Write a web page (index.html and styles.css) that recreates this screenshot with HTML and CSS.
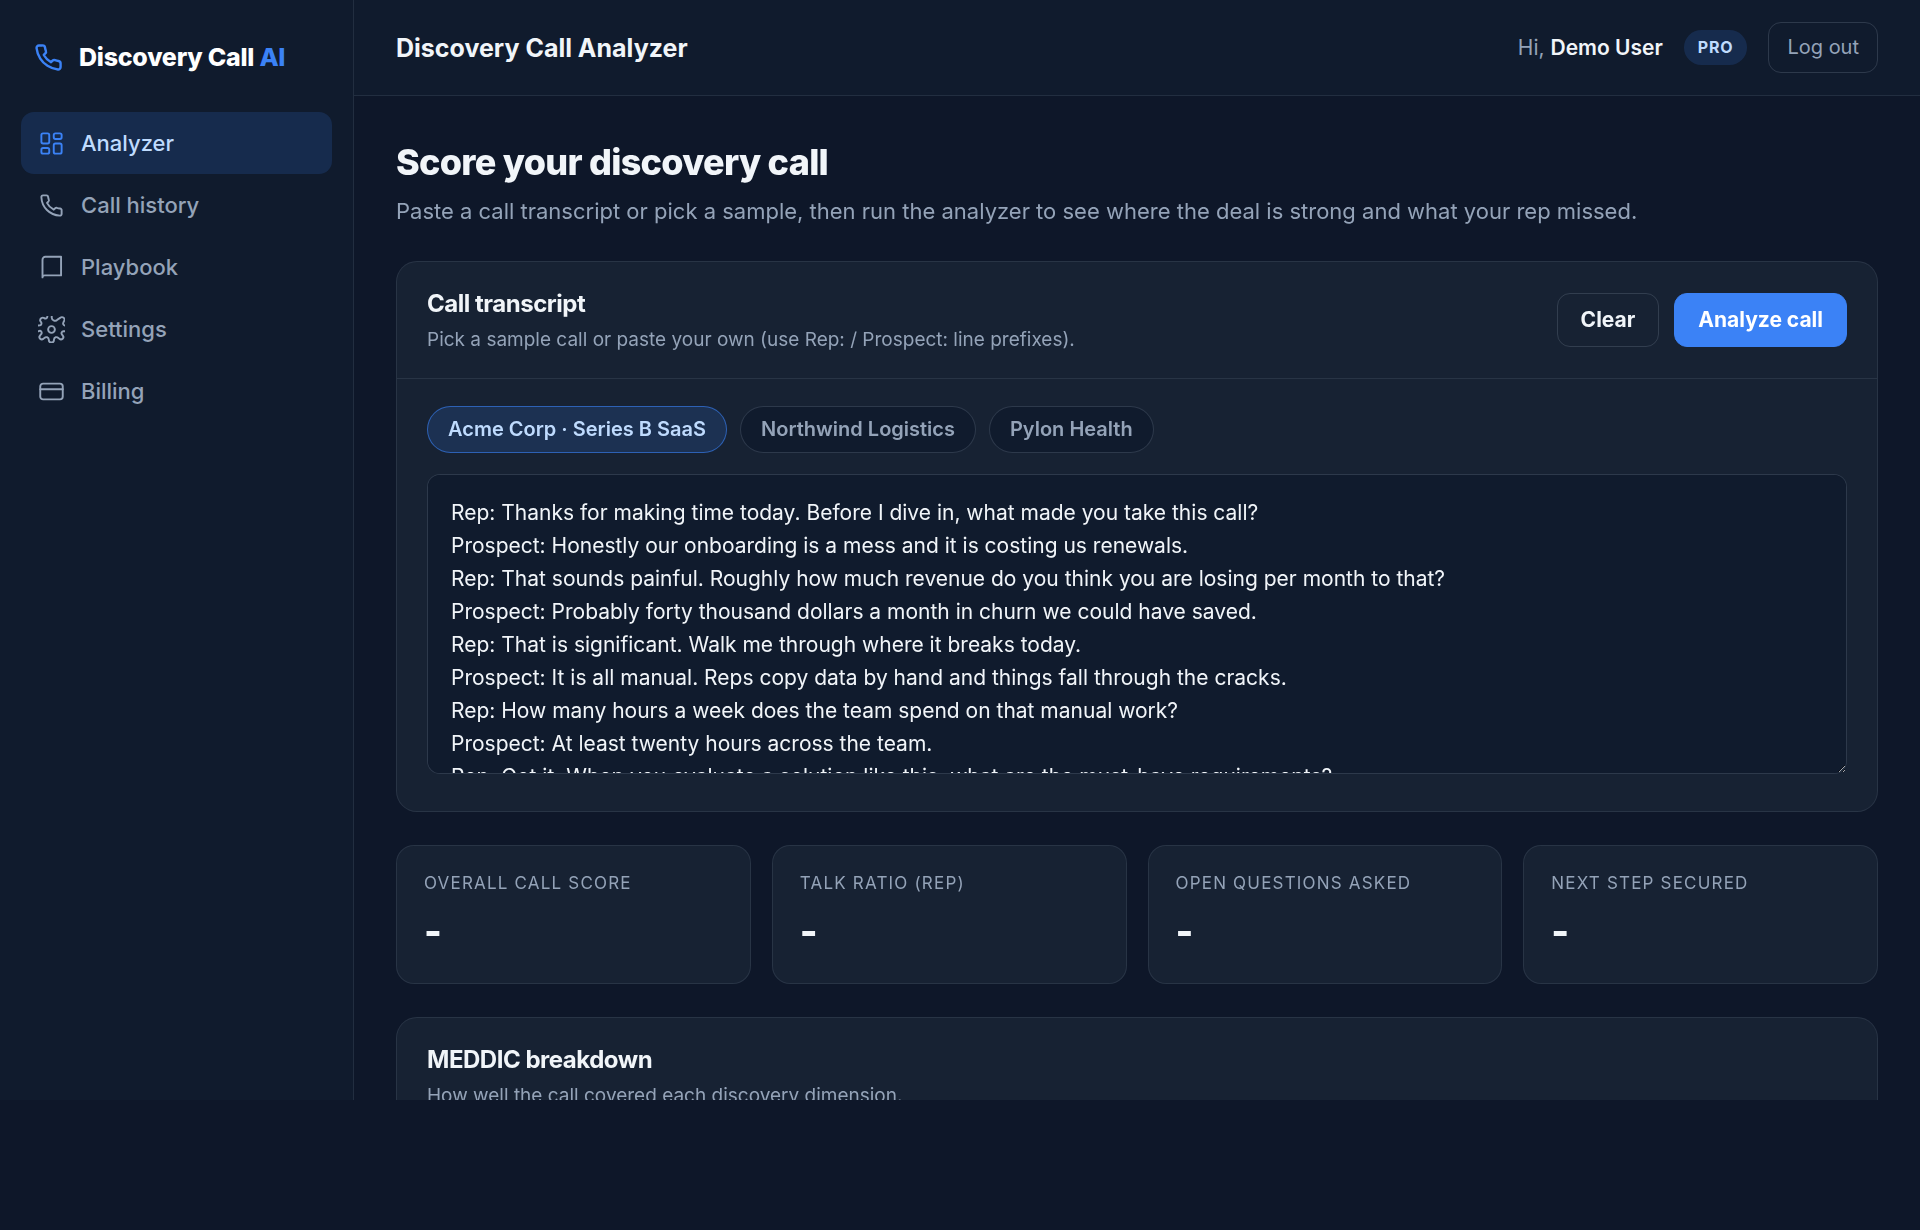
FILE: index.html
```
<!DOCTYPE html>
<html lang="en">
<head>
  <meta charset="UTF-8">
  <meta name="viewport" content="width=device-width, initial-scale=1.0">
  <title>Discovery Call Analyzer</title>
  <link rel="stylesheet" href="styles.css">
</head>
<body>
  <div class="app">
    <!-- Sidebar -->
    <aside class="sidebar">
      <div class="brand">
        <svg class="icon" viewBox="0 0 24 24" xmlns="http://www.w3.org/2000/svg">
          <path d="M22 16.92v3a2 2 0 0 1-2.18 2 19.79 19.79 0 0 1-8.63-3.07 19.5 19.5 0 0 1-6-6 19.79 19.79 0 0 1-3.07-8.67A2 2 0 0 1 4.11 2h3a2 2 0 0 1 2 1.72c.13.96.36 1.9.7 2.81a2 2 0 0 1-.45 2.11L8.09 9.91a16 16 0 0 0 6 6l1.27-1.27a2 2 0 0 1 2.11-.45c.91.34 1.85.57 2.81.7A2 2 0 0 1 22 16.92z"/>
        </svg>
        <span>Discovery Call <span class="accent">AI</span></span>
      </div>
      <nav class="nav">
        <a href="#" class="nav-item active">
          <svg class="icon" viewBox="0 0 24 24" xmlns="http://www.w3.org/2000/svg">
            <rect x="3" y="3" width="7" height="9" rx="1.5"/>
            <rect x="14" y="3" width="7" height="5" rx="1.5"/>
            <rect x="14" y="12" width="7" height="9" rx="1.5"/>
            <rect x="3" y="16" width="7" height="5" rx="1.5"/>
          </svg>
          Analyzer
        </a>
        <a href="#" class="nav-item">
          <svg class="icon" viewBox="0 0 24 24" xmlns="http://www.w3.org/2000/svg">
            <path d="M21 16.5v3a1.5 1.5 0 0 1-1.7 1.5A17 17 0 0 1 3 4.7 1.5 1.5 0 0 1 4.5 3h3a1.5 1.5 0 0 1 1.5 1.3c.1.9.3 1.7.6 2.5a1.5 1.5 0 0 1-.3 1.6L8 9.7a13 13 0 0 0 6 6l1.3-1.3a1.5 1.5 0 0 1 1.6-.3c.8.3 1.6.5 2.5.6a1.5 1.5 0 0 1 1.6 1.8z"/>
          </svg>
          Call history
        </a>
        <a href="#" class="nav-item">
          <svg class="icon" viewBox="0 0 24 24" xmlns="http://www.w3.org/2000/svg">
            <path d="M4 20.8V5a2.5 2.5 0 0 1 2.5-2.5h14V19H6a2 2 0 0 0-2 1.8z"/>
          </svg>
          Playbook
        </a>
        <a href="#" class="nav-item">
          <svg class="icon" viewBox="0 0 24 24" xmlns="http://www.w3.org/2000/svg">
            <circle cx="12" cy="12" r="3"/>
            <path d="M8.3-1V.6a1.7 1.7 0 0 1-2.7 1.3A2.4 2.4 0 0 0 1.9 4.2L2.8 5.6A1.7 1.7 0 0 1 1.8 8.2L-1 8.5"/>
            <path d="M-1 13.5H.6a1.7 1.7 0 0 1 1.9 2.9l-.6.9a2 2 0 0 0 2.9 2.9l.9-.6a2.2 2.2 0 0 1 3.9 1.3v.4a2.3 2.3 0 0 0 4.6 0v-.4a2.2 2.2 0 0 1 3.9-1.3l.9.6a2 2 0 0 0 2.9-2.9l-.6-.9a1.7 1.7 0 0 1 1.3-2.8H25"/>
            <path d="M25 8.4h-1.2a1.7 1.7 0 0 1-1.2-2.6l.3-.9a2.2 2.2 0 0 0-3.2-3.2l-2.4 1.5A2.9 2.9 0 0 1 12.2 1.5V-1"/>
          </svg>
          Settings
        </a>
        <a href="#" class="nav-item">
          <svg class="icon" viewBox="0 0 24 24" xmlns="http://www.w3.org/2000/svg">
            <rect x="2" y="5" width="20" height="14" rx="2.5"/>
            <path d="M2 10h20"/>
          </svg>
          Billing
        </a>
      </nav>
    </aside>

    <div class="main">
      <!-- Top bar -->
      <header class="topbar">
        <div class="topbar-title">Discovery Call Analyzer</div>
        <div class="user">
          <span class="greeting">Hi, <strong>Demo User</strong></span>
          <span class="plan">PRO</span>
          <button type="button" class="logout">Log out</button>
        </div>
      </header>

      <main class="content">
        <div class="page-head">
          <h1>Score your discovery call</h1>
          <p>Paste a call transcript or pick a sample, then run the analyzer to see where the deal is strong and what your rep missed.</p>
        </div>

        <!-- Transcript input -->
        <section class="card">
          <div class="card-head">
            <div>
              <h2>Call transcript</h2>
              <p>Pick a sample call or paste your own (use Rep: / Prospect: line prefixes).</p>
            </div>
            <div class="actions">
              <button type="button" class="btn">Clear</button>
              <button type="button" class="btn btn-primary">Analyze call</button>
            </div>
          </div>
          <div class="card-body">
            <div class="samples">
              <button type="button" class="chip active">Acme Corp · Series B SaaS</button>
              <button type="button" class="chip">Northwind Logistics</button>
              <button type="button" class="chip">Pylon Health</button>
            </div>
            <textarea class="transcript" aria-label="Call transcript" spellcheck="false">Rep: Thanks for making time today. Before I dive in, what made you take this call?
Prospect: Honestly our onboarding is a mess and it is costing us renewals.
Rep: That sounds painful. Roughly how much revenue do you think you are losing per month to that?
Prospect: Probably forty thousand dollars a month in churn we could have saved.
Rep: That is significant. Walk me through where it breaks today.
Prospect: It is all manual. Reps copy data by hand and things fall through the cracks.
Rep: How many hours a week does the team spend on that manual work?
Prospect: At least twenty hours across the team.
Rep: Got it. When you evaluate a solution like this, what are the must-have requirements?</textarea>
          </div>
        </section>

        <!-- Summary numbers -->
        <section class="stats">
          <div class="stat">
            <div class="stat-label">Overall call score</div>
            <div class="stat-value">-</div>
          </div>
          <div class="stat">
            <div class="stat-label">Talk ratio (rep)</div>
            <div class="stat-value">-</div>
          </div>
          <div class="stat">
            <div class="stat-label">Open questions asked</div>
            <div class="stat-value">-</div>
          </div>
          <div class="stat">
            <div class="stat-label">Next step secured</div>
            <div class="stat-value">-</div>
          </div>
        </section>

        <section class="card">
          <div class="card-head">
            <div>
              <h2>MEDDIC breakdown</h2>
              <p>How well the call covered each discovery dimension.</p>
            </div>
          </div>
        </section>
      </main>
    </div>
  </div>
</body>
</html>
```

FILE: styles.css
```
/* Colors */
:root {
  --background: #0e1729;
  --panel: #101b2d;
  --card: #172233;
  --border: rgba(148, 163, 184, 0.14);
  --border-strong: rgba(148, 163, 184, 0.22);
  --text: #f1f5f9;
  --muted: #94a3b8;
  --primary: #3b82f6;
  --primary-soft: rgba(59, 130, 246, 0.16);
  --primary-text: #bfdbfe;
}
* {
  margin: 0;
  padding: 0;
  box-sizing: border-box;
}
body {
  height: 100vh;
  padding-bottom: 130px;
  font-family: Inter, "Liberation Sans", sans-serif;
  font-size: 21px;
  line-height: 32px;
  background: var(--background);
  color: var(--text);
  overflow: hidden;
}
button,
textarea {
  font-family: inherit;
  color: inherit;
}
button {
  cursor: pointer;
}
.app {
  display: flex;
  height: 100%;
  overflow: hidden;
}
.icon {
  flex: none;
  width: 27px;
  height: 27px;
  fill: none;
  stroke: currentColor;
  stroke-width: 1.7;
  stroke-linecap: round;
  stroke-linejoin: round;
}

/* Sidebar */
.sidebar {
  flex: none;
  width: 354px;
  padding: 36px 21px;
  background: var(--panel);
  border-right: 1px solid var(--border);
}
.brand {
  display: flex;
  align-items: center;
  gap: 16px;
  padding: 5px 13px;
  margin-bottom: 34px;
  font-size: 25px;
  font-weight: 800;
  letter-spacing: -0.01em;
  color: #ffffff;
}
.brand .icon {
  width: 29px;
  height: 29px;
  stroke-width: 2;
  color: var(--primary);
}
.accent {
  color: var(--primary);
}
.nav {
  display: flex;
  flex-direction: column;
}
.nav-item {
  display: flex;
  align-items: center;
  gap: 16px;
  padding: 15px 17px;
  border-radius: 13px;
  color: var(--muted);
  font-size: 22px;
  font-weight: 500;
  text-decoration: none;
}
.nav-item.active {
  background: var(--primary-soft);
  color: var(--primary-text);
}
.nav-item.active .icon {
  color: var(--primary);
}

/* Top bar */
.main {
  flex: 1;
  min-width: 0;
  display: flex;
  flex-direction: column;
}
.topbar {
  flex: none;
  display: flex;
  align-items: center;
  justify-content: space-between;
  padding: 22px 42px;
  background: var(--panel);
  border-bottom: 1px solid var(--border);
}
.topbar-title {
  font-size: 25px;
  font-weight: 700;
}
.user {
  display: flex;
  align-items: center;
  gap: 21px;
}
.greeting {
  color: var(--muted);
}
.greeting strong {
  color: var(--text);
  font-weight: 600;
}
.plan {
  padding: 4px 14px;
  border-radius: 18px;
  background: var(--primary-soft);
  color: var(--primary-text);
  font-size: 16px;
  line-height: 27px;
  font-weight: 700;
  letter-spacing: 0.05em;
}
.logout {
  padding: 9px 18px;
  border: 1px solid var(--border-strong);
  border-radius: 13px;
  background: none;
  color: var(--muted);
  font-size: 20px;
  line-height: 31px;
}

/* Page content */
.content {
  flex: 1;
  min-height: 0;
  padding: 42px;
  overflow: hidden;
}
.page-head {
  margin-bottom: 33px;
}
.page-head h1 {
  margin-bottom: 8px;
  font-size: 36px;
  line-height: 48px;
  font-weight: 800;
  letter-spacing: -0.02em;
}
.page-head p {
  font-size: 22px;
  line-height: 34px;
  color: var(--muted);
}
.card {
  margin-bottom: 33px;
  background: var(--card);
  border: 1px solid var(--border);
  border-radius: 21px;
}
.card-head {
  display: flex;
  align-items: center;
  justify-content: space-between;
  padding: 24px 30px;
  border-bottom: 1px solid var(--border);
}
.card-head h2 {
  margin-bottom: 4px;
  font-size: 24px;
  line-height: 36px;
  font-weight: 700;
  letter-spacing: -0.02em;
}
.card-head p {
  font-size: 19px;
  line-height: 28px;
  color: var(--muted);
}
.actions {
  display: flex;
  gap: 15px;
}
.btn {
  padding: 11px 23px;
  border: 1px solid var(--border-strong);
  border-radius: 13px;
  background: none;
  font-size: 21px;
  line-height: 30px;
  font-weight: 700;
}
.btn-primary {
  border-color: var(--primary);
  background: var(--primary);
  color: #ffffff;
}
.card-body {
  padding: 27px 30px 37px;
}
.samples {
  display: flex;
  gap: 13px;
  margin-bottom: 21px;
}
.chip {
  padding: 8px 20px;
  border: 1px solid var(--border-strong);
  border-radius: 24px;
  background: var(--panel);
  color: var(--muted);
  font-size: 20px;
  line-height: 29px;
  font-weight: 600;
}
.chip.active {
  border-color: rgba(59, 130, 246, 0.6);
  background: var(--primary-soft);
  color: var(--primary-text);
}
.transcript {
  display: block;
  width: 100%;
  height: 300px;
  padding: 21px 23px;
  border: 1px solid var(--border-strong);
  border-radius: 13px;
  background: var(--panel);
  font-size: 21px;
  line-height: 33px;
  resize: vertical;
}

/* Stats */
.stats {
  display: grid;
  grid-template-columns: repeat(4, 1fr);
  gap: 21px;
  margin-bottom: 33px;
}
.stat {
  padding: 24px 27px 28px;
  background: var(--card);
  border: 1px solid var(--border);
  border-radius: 18px;
}
.stat-label {
  margin-bottom: 10px;
  font-size: 17px;
  line-height: 27px;
  letter-spacing: 0.07em;
  text-transform: uppercase;
  color: var(--muted);
}
.stat-value {
  font-size: 38px;
  line-height: 48px;
  font-weight: 800;
}
```
